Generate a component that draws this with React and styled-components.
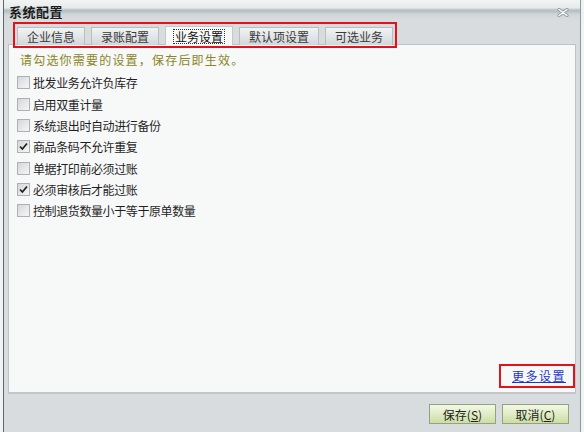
import React from "react";
import styled, { createGlobalStyle } from "styled-components";

const GlobalStyle = createGlobalStyle`
  html, body {
    margin: 0;
    padding: 0;
    width: 584px;
    height: 432px;
    overflow: hidden;
    background: #f3f4f4;
  }
  body {
    font-family: "Noto Sans CJK SC", "Noto Sans", sans-serif;
    color: #222;
  }
`;

const Screen = styled.div`
  display: flex;
  width: 584px;
  height: 432px;
`;

const Edge = styled.div`
  width: 3px;
  background: #f1f2f2;
`;

const Window = styled.div`
  flex: 1;
  display: flex;
  flex-direction: column;
  border-left: 1px solid #5c686d;
  border-right: 1px solid #8d989c;
  background: #d9dcdf;
  min-width: 0;
`;

const TitleBar = styled.div`
  height: 20px;
  display: flex;
  justify-content: space-between;
  align-items: flex-start;
  padding: 0 11px 0 5px;
  background: linear-gradient(
    to bottom,
    #f2f4f4 0px,
    #e6eaeb 8px,
    #b5c1c4 10px,
    #b9c4c7 12px,
    #cfd5d7 14px,
    #d9dcdf 20px
  );
`;

const Title = styled.div`
  margin-top: 3px;
  font-size: 13px;
  line-height: 18px;
  font-weight: bold;
  color: #1c1c1c;
  letter-spacing: 0.5px;
`;

const CloseButton = styled.div`
  margin-top: 8px;
  width: 12px;
  height: 9px;
  display: flex;
`;

const TabStrip = styled.div`
  height: 24px;
  display: flex;
  align-items: flex-start;
  padding-left: 9px;
`;

const TabGroup = styled.div`
  position: relative;
  z-index: 1;
  margin-top: 2px;
  display: flex;
  align-items: flex-end;
  gap: 6px;
  padding: 2px 2px 1px 2px;
  border: 2px solid #e3111a;
  height: 19px;
`;

const Tab = styled.div`
  height: ${(p) => (p.$active ? "19px" : "18px")};
  box-sizing: border-box;
  padding: 0 8px;
  display: flex;
  align-items: center;
  font-size: 12px;
  color: ${(p) => (p.$active ? "#111" : "#3a3a3a")};
  border: 1px solid ${(p) => (p.$active ? "#c2c8cb" : "#b7bec2")};
  border-bottom: none;
  background: ${(p) =>
    p.$active
      ? "#f8f9f9"
      : "linear-gradient(to bottom, #f1f3f4 0%, #e2e6e8 50%, #d2d7da 100%)"};
`;

const TabLabel = styled.span`
  line-height: 13px;
  padding: 0 1px;
  outline: ${(p) => (p.$active ? "1px dotted #333" : "none")};
`;

const ContentPanel = styled.div`
  flex: 1;
  margin: 0 4px;
  display: flex;
  flex-direction: column;
  padding: 7px 0 0 8px;
  background: #f7f8f8;
  border: 1px solid #bcc3c6;
  border-bottom: 2px solid #c2c6c8;
  min-height: 0;
`;

const Instruction = styled.div`
  margin-left: 3px;
  font-size: 12px;
  line-height: 16px;
  letter-spacing: 1.2px;
  color: #8a8626;
`;

const OptionList = styled.div`
  margin-top: 4px;
  display: flex;
  flex-direction: column;
`;

const OptionRow = styled.label`
  height: 21.35px;
  display: flex;
  align-items: center;
  gap: 3px;
  font-size: 12px;
  letter-spacing: -0.4px;
  color: #1f1f1f;
`;

const Box = styled.span`
  width: 13px;
  height: 13px;
  box-sizing: border-box;
  border: 1px solid #aeb1b3;
  background: linear-gradient(135deg, #d5d7d8 0%, #e7e8e9 55%, #f6f6f6 100%);
  display: flex;
  align-items: center;
  justify-content: center;
`;

const LinkRow = styled.div`
  margin-top: auto;
  margin-bottom: 4px;
  display: flex;
  justify-content: flex-end;
`;

const Marked = styled.div`
  border: 2px solid #e3111a;
  padding: 1px 7px 1px 11px;
`;

const MoreLink = styled.a`
  display: block;
  font-size: 12px;
  line-height: 18px;
  letter-spacing: 1.5px;
  color: #1d35c9;
  text-decoration: underline;
  cursor: pointer;
`;

const Footer = styled.div`
  height: 38px;
  box-sizing: border-box;
  padding: 10px 11px 0 0;
  display: flex;
  justify-content: flex-end;
  align-items: flex-start;
  gap: 6px;
`;

const Button = styled.button`
  width: 67px;
  height: 20px;
  padding: 0;
  font-family: inherit;
  font-size: 12px;
  color: #222;
  border: 1px solid #93a37f;
  background: linear-gradient(to bottom, #f3f8e6 0%, #e1ecc4 50%, #cbdea4 100%);
  display: flex;
  align-items: center;
  justify-content: center;
`;

const Key = styled.span`
  text-decoration: underline;
`;

const Check = () => (
  <svg width="11" height="11" viewBox="0 0 11 11">
    <path d="M2 5.5 L4.4 8 L9 2.5" fill="none" stroke="#202020" strokeWidth="1.7" />
  </svg>
);

const CloseIcon = () => (
  <svg width="12" height="9" viewBox="0 0 12 9">
    <path d="M2 1.5 L10 7.5 M10 1.5 L2 7.5" stroke="#8f9a9e" strokeWidth="3.2" strokeLinecap="round" />
    <path d="M2 1.5 L10 7.5 M10 1.5 L2 7.5" stroke="#ffffff" strokeWidth="1.4" strokeLinecap="round" />
  </svg>
);

const tabs = ["企业信息", "录账配置", "业务设置", "默认项设置", "可选业务"];

const options = [
  { label: "批发业务允许负库存", checked: false },
  { label: "启用双重计量", checked: false },
  { label: "系统退出时自动进行备份", checked: false },
  { label: "商品条码不允许重复", checked: true },
  { label: "单据打印前必须过账", checked: false },
  { label: "必须审核后才能过账", checked: true },
  { label: "控制退货数量小于等于原单数量", checked: false },
];

export default function App() {
  return (
    <>
      <GlobalStyle />
      <Screen>
        <Edge />
        <Window>
          <TitleBar>
            <Title>系统配置</Title>
            <CloseButton>
              <CloseIcon />
            </CloseButton>
          </TitleBar>
          <TabStrip>
            <TabGroup>
              {tabs.map((t) => (
                <Tab key={t} $active={t === "业务设置"}>
                  <TabLabel $active={t === "业务设置"}>{t}</TabLabel>
                </Tab>
              ))}
            </TabGroup>
          </TabStrip>
          <ContentPanel>
            <Instruction>请勾选你需要的设置，保存后即生效。</Instruction>
            <OptionList>
              {options.map((o) => (
                <OptionRow key={o.label}>
                  <Box>{o.checked && <Check />}</Box>
                  {o.label}
                </OptionRow>
              ))}
            </OptionList>
            <LinkRow>
              <Marked>
                <MoreLink>更多设置</MoreLink>
              </Marked>
            </LinkRow>
          </ContentPanel>
          <Footer>
            <Button>
              保存(<Key>S</Key>)
            </Button>
            <Button>
              取消(<Key>C</Key>)
            </Button>
          </Footer>
        </Window>
        <Edge />
      </Screen>
    </>
  );
}
